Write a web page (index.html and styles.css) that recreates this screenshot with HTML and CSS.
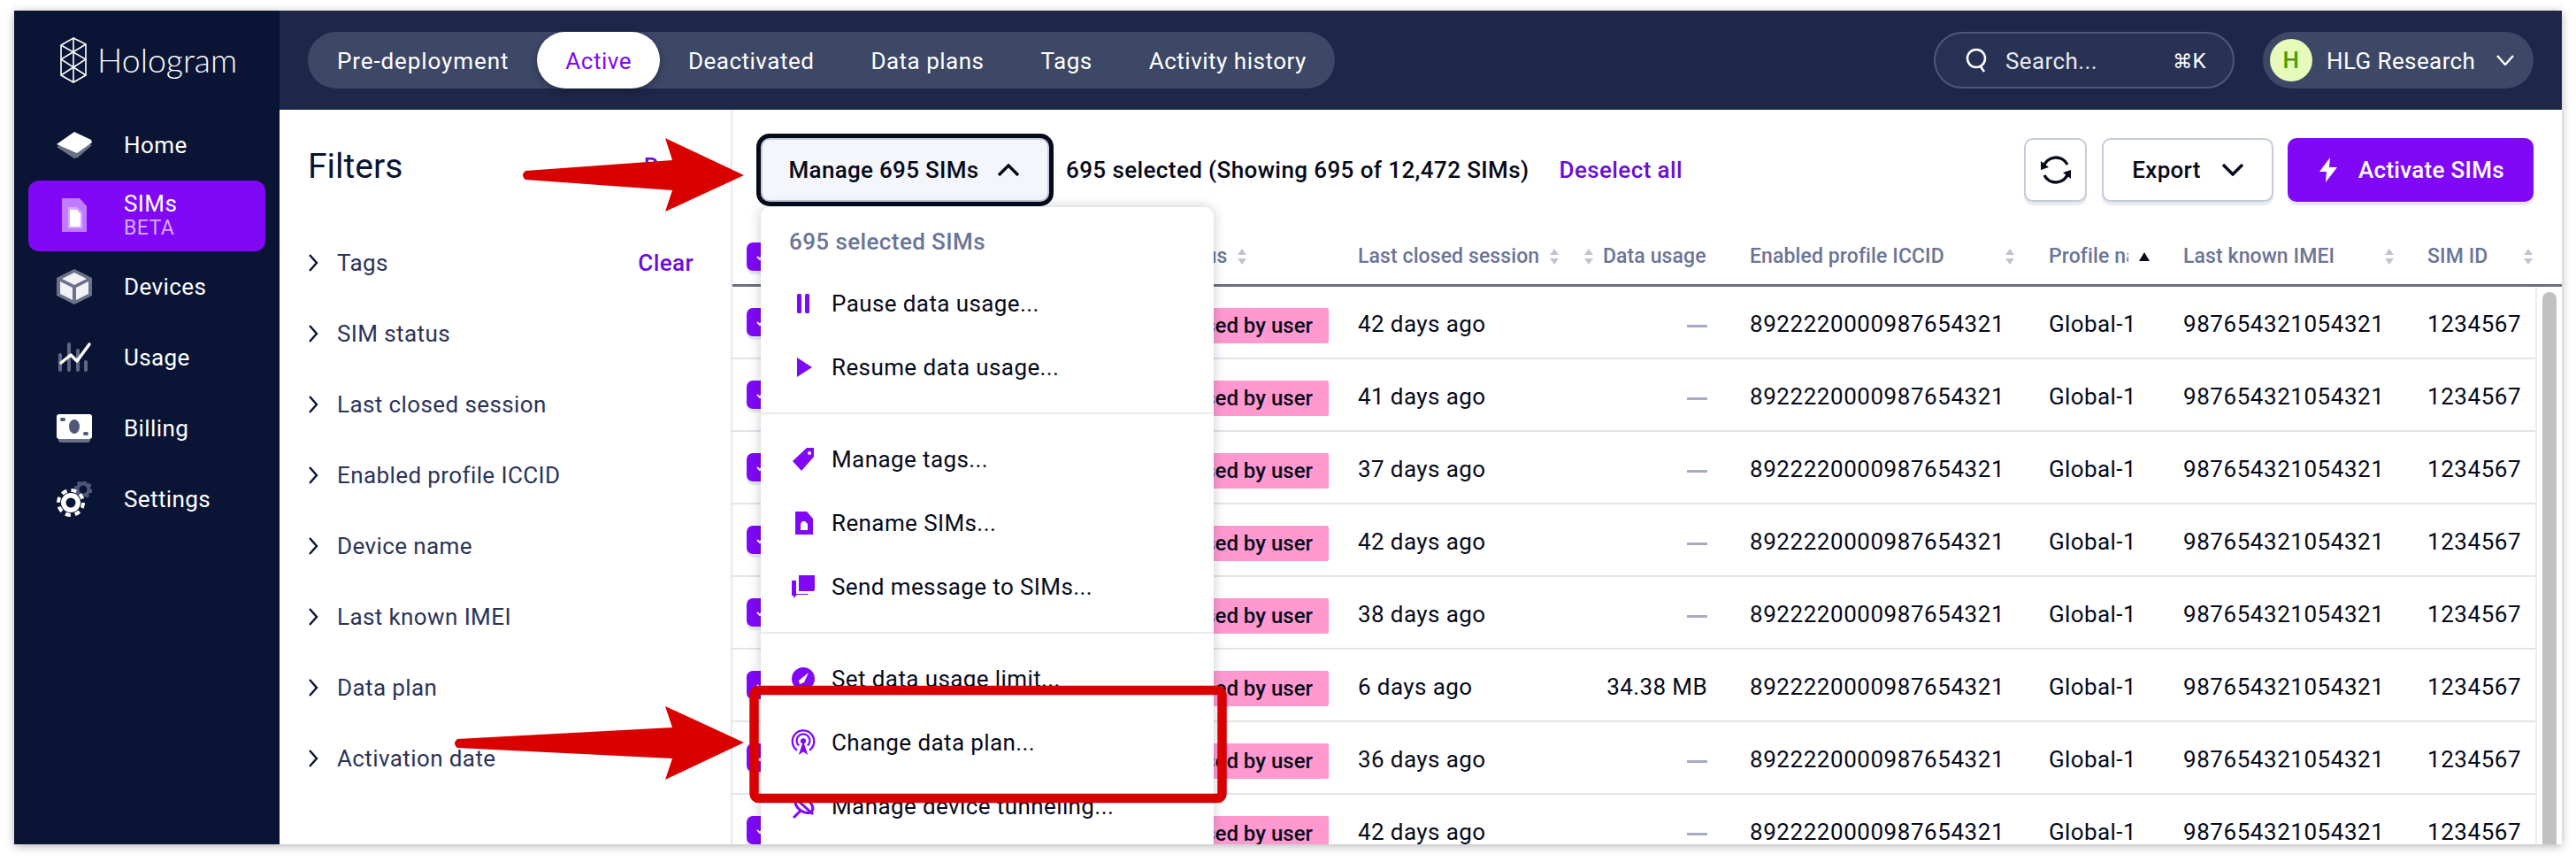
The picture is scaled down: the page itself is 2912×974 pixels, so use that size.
FILE: index.html
```html
<!DOCTYPE html>
<html lang="en">
<head>
<meta charset="utf-8">
<title>Hologram SIMs</title>
<link rel="stylesheet" href="styles.css">
</head>
<body>
<div class="window">
  <aside class="sidebar">
    <div class="logo">
      <svg class="logo-mark" viewBox="0 0 30 52" fill="none" stroke="#fff" stroke-width="1.6">
        <path d="M15 1 29 8V43L15 51 1 43V9L15 1V51M1 9 29 25 1 43M29 8 1 25 29 43"/>
      </svg>
      <span class="logo-text">Hologram</span>
    </div>
    <nav class="nav">
      <a class="nav-item">
        <svg class="nav-icon" viewBox="0 0 40 30"><path fill="#6a7189" d="M0 17 18 7 40 15 24 29 20 30Z"/><path fill="#fff" d="M20 0 39 9 40 12 23 24 0 14Z"/></svg>
        <span>Home</span>
      </a>
      <a class="nav-item active">
        <svg class="nav-icon" viewBox="0 0 40 40"><path fill="#c07bff" d="M6 0H26L34 9V38H6Z"/><path fill="#d8aaff" d="M13 10H23L29 16V34H13Z"/><path fill="#fff" d="M15 13H23L27 18V32H15Z"/></svg>
        <span class="nav-label"><span>SIMs</span><small>BETA</small></span>
      </a>
      <a class="nav-item">
        <svg class="nav-icon" viewBox="0 0 40 40"><path fill="#6a7189" d="M20 0 40 10V30L20 40 0 30V10Z"/><path fill="#f1f1f6" d="M20 4 34 11 20 18 6 11ZM4 14 18 21V35L4 28ZM36 14V28L22 35V21Z"/></svg>
        <span>Devices</span>
      </a>
      <a class="nav-item">
        <svg class="nav-icon" viewBox="0 0 40 34"><g stroke="#5f6785" stroke-width="4" stroke-linecap="round"><path d="M4 14V31M14 2V31M24 9V31M33 22V31"/></g><path d="M5 23 16 14 23 21 37 2" fill="none" stroke="#fff" stroke-width="3.5" stroke-linecap="round" stroke-linejoin="round"/></svg>
        <span>Usage</span>
      </a>
      <a class="nav-item">
        <svg class="nav-icon" viewBox="0 0 40 32"><path fill="#6a7189" d="M2 26H38V29Q38 32 35 32H5Q2 32 2 29Z"/><rect width="40" height="28" rx="3" fill="#fff"/><ellipse cx="20" cy="14" rx="6" ry="8" fill="#4f5878"/><rect x="4" y="4" width="6" height="4" rx="2" fill="#4f5878"/><rect x="30" y="20" width="6" height="4" rx="2" fill="#4f5878"/></svg>
        <span>Billing</span>
      </a>
      <a class="nav-item">
        <svg class="nav-icon" viewBox="0 0 40 40"><circle cx="30" cy="9" r="6.5" fill="none" stroke="#4f5878" stroke-width="4"/><circle cx="30" cy="9" r="9" fill="none" stroke="#4f5878" stroke-width="2.5" stroke-dasharray="4 3"/><circle cx="16" cy="24" r="11" fill="#fff"/><circle cx="16" cy="24" r="14" fill="none" stroke="#fff" stroke-width="4" stroke-dasharray="6 5"/><circle cx="16" cy="24" r="5.5" fill="#0a1535"/></svg>
        <span>Settings</span>
      </a>
    </nav>
  </aside>

  <div class="content">
    <header class="topbar">
      <div class="tabs">
        <a class="tab tab-first">Pre-deployment</a>
        <a class="tab tab-active">Active</a>
        <a class="tab">Deactivated</a>
        <a class="tab">Data plans</a>
        <a class="tab">Tags</a>
        <a class="tab">Activity history</a>
      </div>
      <div class="search">
        <svg class="search-icon" viewBox="0 0 26 28" fill="none" stroke="#fff" stroke-width="2.6"><circle cx="12" cy="12" r="10"/><path d="M16 20 21 27"/></svg>
        <span class="search-text">Search...</span>
        <span class="search-key"><span class="cmd">⌘</span>K</span>
      </div>
      <div class="account">
        <span class="avatar">H</span>
        <span class="account-name">HLG Research</span>
        <svg class="account-chev" viewBox="0 0 20 12" fill="none" stroke="#fff" stroke-width="2.4"><path d="M1 1 10 11 19 1"/></svg>
      </div>
    </header>

    <div class="body">
      <section class="filters">
        <div class="filters-head">
          <h2>Filters</h2>
          <a class="link">Reset</a>
        </div>
        <ul class="filter-list">
          <li class="filter"><svg class="chev" viewBox="0 0 12 20"><path d="M2 1 10 10 2 19"/></svg><span>Tags</span><a class="link clear">Clear</a></li>
          <li class="filter"><svg class="chev" viewBox="0 0 12 20"><path d="M2 1 10 10 2 19"/></svg><span>SIM status</span></li>
          <li class="filter"><svg class="chev" viewBox="0 0 12 20"><path d="M2 1 10 10 2 19"/></svg><span>Last closed session</span></li>
          <li class="filter"><svg class="chev" viewBox="0 0 12 20"><path d="M2 1 10 10 2 19"/></svg><span>Enabled profile ICCID</span></li>
          <li class="filter"><svg class="chev" viewBox="0 0 12 20"><path d="M2 1 10 10 2 19"/></svg><span>Device name</span></li>
          <li class="filter"><svg class="chev" viewBox="0 0 12 20"><path d="M2 1 10 10 2 19"/></svg><span>Last known IMEI</span></li>
          <li class="filter"><svg class="chev" viewBox="0 0 12 20"><path d="M2 1 10 10 2 19"/></svg><span>Data plan</span></li>
          <li class="filter"><svg class="chev" viewBox="0 0 12 20"><path d="M2 1 10 10 2 19"/></svg><span>Activation date</span></li>
        </ul>
      </section>

      <main class="main">
        <div class="toolbar">
          <button class="btn btn-manage">Manage 695 SIMs<svg class="btn-chev" viewBox="0 0 24 14" fill="none" stroke="#060a1a" stroke-width="3.4"><path d="M1 13 12 2 23 13"/></svg></button>
          <span class="selected">695 selected (Showing 695 of 12,472 SIMs)</span>
          <a class="link deselect">Deselect all</a>
          <span class="spacer"></span>
          <button class="btn btn-icon"><svg class="refresh" viewBox="0 0 34 36" fill="none" stroke="#060a1a" stroke-width="3.4"><path d="M3 15A14.500 14.500 0 0 1 30 12"/><path d="M31 21A14.500 14.500 0 0 1 4 24"/><path fill="#060a1a" stroke="none" d="M0 8 9 15 0 18ZM34 28 25 21 34 18Z"/></svg></button>
          <button class="btn btn-export">Export<svg class="btn-chev" viewBox="0 0 24 14" fill="none" stroke="#060a1a" stroke-width="3.4"><path d="M1 1 12 12 23 1"/></svg></button>
          <button class="btn btn-primary"><svg class="bolt" viewBox="0 0 22 28"><path fill="#fff" d="M13 0 1 16H9L8 28 21 11H12Z"/></svg>Activate SIMs</button>
        </div>

        <div class="grid thead">
          <div class="cell"><span class="check"><svg viewBox="0 0 12 10" fill="none" stroke="#fff" stroke-width="2"><path d="M2 5 5 8 10 2"/></svg></span></div>
          <div class="cell th"><span>SIM status</span><svg class="sort" viewBox="0 0 10 18"><path d="M5 0 10 7H0ZM5 18 0 11H10Z"/></svg></div>
          <div class="cell th"><span>Last closed session</span><svg class="sort" viewBox="0 0 10 18"><path d="M5 0 10 7H0ZM5 18 0 11H10Z"/></svg></div>
          <div class="cell th th-usage"><svg class="sort" viewBox="0 0 10 18"><path d="M5 0 10 7H0ZM5 18 0 11H10Z"/></svg><span>Data usage</span></div>
          <div class="cell th th-iccid"><span>Enabled profile ICCID</span><svg class="sort" viewBox="0 0 10 18"><path d="M5 0 10 7H0ZM5 18 0 11H10Z"/></svg></div>
          <div class="cell th th-profile"><span class="clip">Profile name</span><svg class="sort-up" viewBox="0 0 12 10"><path d="M6 0 12 10H0Z"/></svg></div>
          <div class="cell th th-imei"><span>Last known IMEI</span><svg class="sort" viewBox="0 0 10 18"><path d="M5 0 10 7H0ZM5 18 0 11H10Z"/></svg></div>
          <div class="cell th th-sim"><span>SIM ID</span><svg class="sort" viewBox="0 0 10 18"><path d="M5 0 10 7H0ZM5 18 0 11H10Z"/></svg></div>
        </div>

        <div class="tbody">
          <div class="rows">
            <div class="grid row"><div class="cell"><span class="check"><svg viewBox="0 0 12 10" fill="none" stroke="#fff" stroke-width="2"><path d="M2 5 5 8 10 2"/></svg></span></div><div class="cell"><span class="badge">Paused by user</span></div><div class="cell">42 days ago</div><div class="cell usage"><span class="dash"></span></div><div class="cell num">8922220000987654321</div><div class="cell">Global-1</div><div class="cell num">987654321054321</div><div class="cell num">1234567</div></div>
            <div class="grid row"><div class="cell"><span class="check"><svg viewBox="0 0 12 10" fill="none" stroke="#fff" stroke-width="2"><path d="M2 5 5 8 10 2"/></svg></span></div><div class="cell"><span class="badge">Paused by user</span></div><div class="cell">41 days ago</div><div class="cell usage"><span class="dash"></span></div><div class="cell num">8922220000987654321</div><div class="cell">Global-1</div><div class="cell num">987654321054321</div><div class="cell num">1234567</div></div>
            <div class="grid row"><div class="cell"><span class="check"><svg viewBox="0 0 12 10" fill="none" stroke="#fff" stroke-width="2"><path d="M2 5 5 8 10 2"/></svg></span></div><div class="cell"><span class="badge">Paused by user</span></div><div class="cell">37 days ago</div><div class="cell usage"><span class="dash"></span></div><div class="cell num">8922220000987654321</div><div class="cell">Global-1</div><div class="cell num">987654321054321</div><div class="cell num">1234567</div></div>
            <div class="grid row"><div class="cell"><span class="check"><svg viewBox="0 0 12 10" fill="none" stroke="#fff" stroke-width="2"><path d="M2 5 5 8 10 2"/></svg></span></div><div class="cell"><span class="badge">Paused by user</span></div><div class="cell">42 days ago</div><div class="cell usage"><span class="dash"></span></div><div class="cell num">8922220000987654321</div><div class="cell">Global-1</div><div class="cell num">987654321054321</div><div class="cell num">1234567</div></div>
            <div class="grid row"><div class="cell"><span class="check"><svg viewBox="0 0 12 10" fill="none" stroke="#fff" stroke-width="2"><path d="M2 5 5 8 10 2"/></svg></span></div><div class="cell"><span class="badge">Paused by user</span></div><div class="cell">38 days ago</div><div class="cell usage"><span class="dash"></span></div><div class="cell num">8922220000987654321</div><div class="cell">Global-1</div><div class="cell num">987654321054321</div><div class="cell num">1234567</div></div>
            <div class="grid row"><div class="cell"><span class="check"><svg viewBox="0 0 12 10" fill="none" stroke="#fff" stroke-width="2"><path d="M2 5 5 8 10 2"/></svg></span></div><div class="cell"><span class="badge">Paused by user</span></div><div class="cell">6 days ago</div><div class="cell usage">34.38 MB</div><div class="cell num">8922220000987654321</div><div class="cell">Global-1</div><div class="cell num">987654321054321</div><div class="cell num">1234567</div></div>
            <div class="grid row"><div class="cell"><span class="check"><svg viewBox="0 0 12 10" fill="none" stroke="#fff" stroke-width="2"><path d="M2 5 5 8 10 2"/></svg></span></div><div class="cell"><span class="badge">Paused by user</span></div><div class="cell">36 days ago</div><div class="cell usage"><span class="dash"></span></div><div class="cell num">8922220000987654321</div><div class="cell">Global-1</div><div class="cell num">987654321054321</div><div class="cell num">1234567</div></div>
            <div class="grid row"><div class="cell"><span class="check"><svg viewBox="0 0 12 10" fill="none" stroke="#fff" stroke-width="2"><path d="M2 5 5 8 10 2"/></svg></span></div><div class="cell"><span class="badge">Paused by user</span></div><div class="cell">42 days ago</div><div class="cell usage"><span class="dash"></span></div><div class="cell num">8922220000987654321</div><div class="cell">Global-1</div><div class="cell num">987654321054321</div><div class="cell num">1234567</div></div>
          </div>
          <div class="scrollbar"><div class="thumb"></div></div>
        </div>
      </main>
    </div>
  </div>

  <div class="menu">
    <div class="menu-head">695 selected SIMs</div>
    <div class="menu-group menu-group-first">
      <a class="menu-item"><svg class="menu-icon" viewBox="0 0 28 28"><rect x="7" y="3" width="5" height="22" rx="1.500"/><rect x="16" y="3" width="5" height="22" rx="1.500"/></svg>Pause data usage...</a>
      <a class="menu-item"><svg class="menu-icon" viewBox="0 0 28 28"><path d="M7 3 24 14 7 25Z"/></svg>Resume data usage...</a>
    </div>
    <div class="menu-group">
      <a class="menu-item"><svg class="menu-icon" viewBox="0 0 28 28"><path fill-rule="evenodd" d="M18 1H26V11L12 27 2 16ZM21 5A2 2 0 1 0 21 9 2 2 0 0 0 21 5Z"/></svg>Manage tags...</a>
      <a class="menu-item"><svg class="menu-icon" viewBox="0 0 28 28"><path fill-rule="evenodd" d="M5 1H18L25 9V27H5ZM11 15V22H19V15L16 12H13Z"/></svg>Rename SIMs...</a>
      <a class="menu-item"><svg class="menu-icon" viewBox="0 0 28 28"><path d="M9 1H27V17L26 19H9Z"/><path d="M1 7H6V22H20L19 23H7L3 27V24H1Z"/></svg>Send message to SIMs...</a>
    </div>
    <div class="menu-group">
      <a class="menu-item"><svg class="menu-icon" viewBox="0 0 28 28"><path fill-rule="evenodd" d="M14 1A13 13 0 1 0 14 27 13 13 0 0 0 14 1ZM20 7 15 18 10 20 9 16Z"/></svg>Set data usage limit...</a>
      <a class="menu-item"><svg class="menu-icon antenna" viewBox="0 0 32 34"><g fill="none" stroke="#8008f7" stroke-width="2.600"><path d="M8 27A14 14 0 1 1 24 27"/><path d="M10.500 21A8.500 8.500 0 1 1 21.500 21"/></g><circle cx="16" cy="15" r="3.500"/><path d="M15 18H17L22 33 16 29 10 33Z"/></svg>Change data plan...</a>
      <a class="menu-item"><svg class="menu-icon" viewBox="0 0 28 28"><g fill="none" stroke="#8008f7" stroke-width="3"><ellipse cx="15" cy="13" rx="11" ry="7" transform="rotate(35 15 13)"/><path d="M3 27 11 19M4 4 25 23"/></g></svg>Manage device tunneling...</a>
    </div>
  </div>

  <svg class="annotations" viewBox="16 12 2880 942">
    <path class="arrow" d="M594 193 760 181 752 156 841 198 752 239 760 215 594 203Q588 198 594 193Z"/>
    <path class="arrow" d="M517 835 760 822 752 798 841 839 752 881 760 857 517 845Q511 840 517 835Z"/>
    <rect class="callout" x="852.500" y="780" width="529" height="122" rx="5"/>
  </svg>
</div>
</body>
</html>
```
FILE: styles.css
```css
* { box-sizing: border-box; }
html, body { margin: 0; background: #fff; }
body { padding: 12px 16px 20px; font-family: Roboto, "Liberation Sans", sans-serif; font-size: 26px; color: #060a1a; letter-spacing: .4px; }
a { display: block; }
.window { position: relative; display: flex; width: 2880px; height: 942px; overflow: hidden; background: #fff; box-shadow: 0 2px 10px rgba(0,0,0,.3); }

.sidebar { width: 300px; flex: none; background: #0a1535; color: #fff; padding: 30px 16px 0; }
.logo { display: flex; align-items: center; gap: 12px; height: 52px; padding-left: 36px; }
.logo-mark { width: 30px; height: 52px; flex: none; }
.logo-text { font-family: Lato, sans-serif; font-weight: 300; font-size: 37.500px; letter-spacing: 0; line-height: 1; }
.nav { margin-top: 30px; display: flex; flex-direction: column; }
.nav-item { display: flex; align-items: center; height: 80px; padding-left: 32px; gap: 36px; border-radius: 12px; }
.nav-item.active { background: #8008f7; }
.nav-icon { width: 40px; height: 40px; flex: none; }
.nav-label { display: flex; flex-direction: column; line-height: 28px; }
.nav-label small { font-size: 23px; color: #d8aaff; }

.content { flex: 1; min-width: 0; display: flex; flex-direction: column; }
.topbar { height: 112px; flex: none; background: #1e2749; padding: 24px 32px; display: flex; align-items: center; color: #fff; }
.tabs { display: flex; height: 64px; background: #3d4766; border-radius: 32px; padding-left: 1px; letter-spacing: .5px; }
.tab { display: flex; align-items: center; padding: 2px 32px 0; }
.tab-first { letter-spacing: .9px; }
.tab-active { background: #fff; color: #8008f7; border-radius: 32px; box-shadow: 0 3px 8px rgba(0,0,0,.3); }
.search { margin-left: auto; width: 340px; height: 64px; border: 2px solid #4f5878; border-radius: 32px; background: #283254; display: flex; align-items: center; padding: 0 30px 0 34px; }
.search-icon { width: 26px; height: 28px; flex: none; }
.search-text { margin-left: 19px; flex: 1; color: #e6e8f0; padding-top: 2px; }
.search-key { font-size: 24px; padding-top: 2px; }
.cmd { font-family: "DejaVu Sans", sans-serif; font-size: 22px; }
.account { margin-left: 32px; width: 306px; height: 64px; background: #3d4766; border-radius: 32px; display: flex; align-items: center; padding: 0 22px 0 8px; }
.avatar { width: 48px; height: 48px; border-radius: 50%; background: #e6fbb9; color: #4a9a06; display: flex; align-items: center; justify-content: center; font-weight: 500; }
.account-name { margin-left: 16px; flex: 1; padding-top: 2px; }
.account-chev { width: 20px; height: 12px; }

.body { flex: 1; min-height: 0; display: flex; }
.filters { width: 512px; flex: none; border-right: 2px solid #e5e8f0; padding: 0 30px 0 32px; }
.filters-head { display: flex; justify-content: space-between; align-items: center; height: 128px; }
.filters-head h2 { margin: 0; font-size: 39px; font-weight: 400; letter-spacing: 0; color: #0a1433; }
.link { color: #6a0dd8; font-weight: 500; }
.filter-list { list-style: none; margin: 5px 0 0; padding: 0; }
.filter { display: flex; align-items: center; height: 80px; color: #2b3358; }
.chev { width: 12px; height: 20px; flex: none; margin-right: 21px; fill: none; stroke: #0a1433; stroke-width: 2.4; }
.clear { margin-left: auto; margin-right: 12px; }

.main { flex: 1; min-width: 0; display: flex; flex-direction: column; }
.toolbar { height: 132px; flex: none; padding: 32px 32px 0; display: flex; align-items: flex-start; }
.btn { height: 72px; border: 2px solid #c5cbdb; border-radius: 10px; background: #fff; font: inherit; font-weight: 500; letter-spacing: .3px; color: #060a1a; display: flex; align-items: center; justify-content: center; padding: 0; box-shadow: 0 4px 0 #e8e9ee; }
.btn-manage { width: 326px; background: #f4f6fb; box-shadow: 0 0 0 5px #060a1a; gap: 22px; padding-right: 2px; }
.btn-chev { width: 24px; height: 14px; flex: none; }
.selected { margin-left: 19px; line-height: 72px; font-weight: 500; }
.deselect { margin-left: 34px; line-height: 72px; }
.spacer { flex: 1; }
.btn-icon { width: 71px; }
.refresh { width: 34px; height: 36px; }
.btn-export { width: 194px; margin-left: 17px; gap: 24px; }
.btn-primary { width: 278px; margin-left: 16px; background: #8008f7; border-color: #8008f7; color: #fff; gap: 23px; padding-left: 2px; }
.bolt { width: 22px; height: 28px; flex: none; }

.grid { display: grid; grid-template-columns: 448px 259px 245px 198px 338px 152px 276px 1fr; }
.thead { height: 68px; flex: none; border-bottom: 3px solid #6b7080; align-items: center; padding-top: 2px; }
.cell { min-width: 0; white-space: nowrap; }
.cell:first-child { padding-left: 16px; display: flex; }
.th { display: flex; align-items: center; font-size: 23px; font-weight: 500; color: #6b7596; letter-spacing: .1px; }
.sort { width: 10px; height: 18px; flex: none; margin-left: 12px; fill: #c0c4d0; }
.th-usage { padding-left: 11px; }
.th-usage .sort { margin: 0 11px 0 0; }
.th-iccid .sort { margin-left: 69px; }
.clip { width: 90px; overflow: hidden; }
.sort-up { width: 12px; height: 10px; margin-left: 12px; fill: #060a1a; }
.th-imei .sort { margin-left: 57px; }
.th-sim .sort { margin-left: 41px; }
.check { width: 32px; height: 32px; background: #8008f7; border-radius: 7px; box-shadow: 0 4px 0 #e8e9ee; display: flex; align-items: center; justify-content: center; }
.check svg { width: 12px; height: 10px; }

.tbody { flex: 1; min-height: 0; display: flex; overflow: hidden; }
.rows { width: 2038px; flex: none; }
.row { height: 82px; border-bottom: 2px solid #e3e3ea; align-items: center; padding-top: 4px; }
.row .cell:first-child { margin-top: -4px; }
.num { letter-spacing: .55px; }
.badge { display: inline-block; height: 40px; line-height: 40px; margin-top: 4px; background: #ff99d0; border-radius: 2px; padding: 0 18px; font-size: 24px; font-weight: 500; letter-spacing: 0; width: 222px; text-align: right; }
.row .cell:nth-child(2) { padding-left: 4px; }
.usage { padding-right: 48px; text-align: right; }
.dash { display: inline-block; width: 23px; height: 3px; background: #a6adc2; vertical-align: middle; }
.scrollbar { flex: 1; border-left: 2px solid #ecedf1; background: #fff; padding: 6px 6px 0 6px; }
.thumb { height: 100%; background: #c1c1c1; border-radius: 8px 8px 0 0; }

.menu { position: absolute; left: 844px; top: 222px; width: 512px; background: #fff; border-radius: 10px 10px 0 0; box-shadow: 0 0 14px rgba(10,20,51,.22); }
.menu-head { height: 73px; padding: 24px 0 0 32px; font-weight: 500; color: #6b7596; }
.menu-group { padding: 15px 0; border-bottom: 2px solid #e8ebf0; }
.menu-group-first { padding-top: 0; }
.menu-item { display: flex; align-items: center; height: 72px; padding-left: 34px; gap: 18px; }
.menu-icon { width: 28px; height: 28px; flex: none; fill: #8008f7; }
.antenna { height: 30px; }

.annotations { position: absolute; left: 0; top: 0; width: 2880px; height: 942px; pointer-events: none; }
.arrow { fill: #d90000; }
.callout { fill: none; stroke: #d90000; stroke-width: 10.500; }
```
